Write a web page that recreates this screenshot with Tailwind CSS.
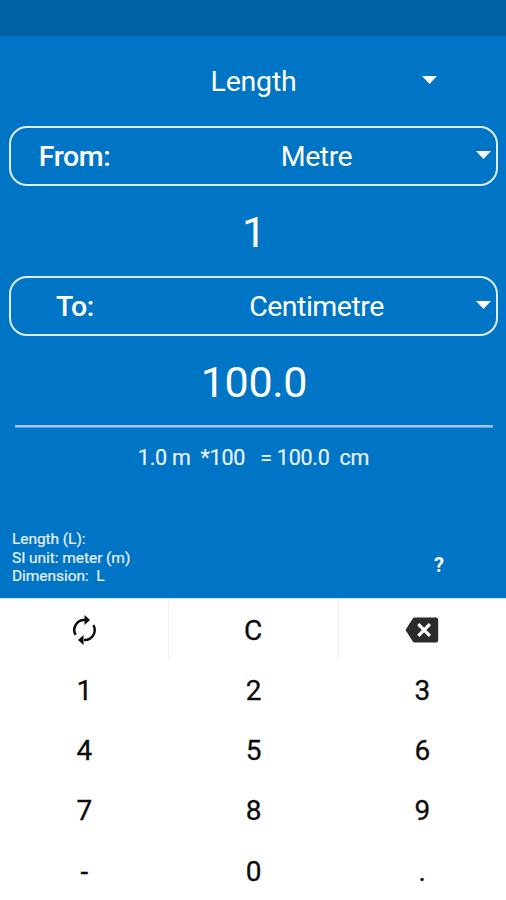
<!DOCTYPE html>
<html lang="en">
<head>
<meta charset="utf-8">
<title>Unit converter</title>
<script src="https://cdn.jsdelivr.net/npm/@tailwindcss/browser@4"></script>
</head>
<body class="flex h-[900px] w-[506px] flex-col overflow-hidden bg-[#0075c5] font-['Roboto','Liberation_Sans',sans-serif] text-white">
  <div class="h-9 shrink-0 bg-[#0062a2]"></div>
  <main class="flex h-[562px] shrink-0 flex-col">
    <div class="flex h-[90px] items-center pl-[84px] pr-[69px]">
      <span class="flex-1 pl-px pt-px text-center text-[28.5px] leading-[34px] tracking-[-0.2px]">Length</span>
      <svg class="mb-[2px] h-2 w-[15px]" viewBox="0 0 15 8" fill="currentColor"><path d="M0 0h15L7.5 8z"/></svg>
    </div>
    <div class="mx-[8.5px] flex h-[60px] items-center rounded-[18px] border-2 border-[#e0ecfa] pr-[5px]">
      <span class="w-[128px] pt-[2px] text-center text-[28.5px] font-medium leading-[34px] tracking-[-0.4px]">From:</span>
      <span class="flex-1 pl-[19px] pt-[2px] text-center text-[28.5px] leading-[34px] tracking-[-0.5px]">Metre</span>
      <svg class="mb-[2px] h-2 w-[15px]" viewBox="0 0 15 8" fill="currentColor"><path d="M0 0h15L7.5 8z"/></svg>
    </div>
    <div class="flex h-[90px] items-center justify-center pt-[2px] pl-[2px] text-[43px]">1</div>
    <div class="mx-[8.5px] flex h-[60px] items-center rounded-[18px] border-2 border-[#e0ecfa] pr-[5px]">
      <span class="w-[128px] pl-px pt-[2px] text-center text-[28.5px] font-medium leading-[34px] tracking-[-0.4px]">To:</span>
      <span class="flex-1 pl-[19px] pt-[2px] text-center text-[28.5px] leading-[34px] tracking-[-0.5px]">Centimetre</span>
      <svg class="mb-[2px] h-2 w-[15px]" viewBox="0 0 15 8" fill="currentColor"><path d="M0 0h15L7.5 8z"/></svg>
    </div>
    <div class="flex h-[89px] items-center justify-center pt-1 pl-[2px] text-[43px] tracking-[-0.3px]">100.0</div>
    <div class="ml-[14.5px] mr-[13px] h-[3px] shrink-0 border-b border-[#5d9fdc] bg-[#a3c8ee]"></div>
    <div class="mt-[17px] h-[26px] whitespace-pre pl-px text-center text-[21.5px] leading-[26px] tracking-[-0.27px] text-[#eaf2ff] [-webkit-text-stroke:0.2px]">1.0 m  *100   = 100.0  cm</div>
    <div class="mt-auto flex items-end justify-between pb-[13px] pl-3 pr-[62px]">
      <p class="whitespace-pre text-[15.5px] leading-[18.2px] tracking-[-0.06px] text-[#e6f0fd] [-webkit-text-stroke:0.2px]">Length (L):
SI unit: meter (m)
Dimension:  L</p>
      <span class="pb-[8px] text-[20px] font-bold leading-6">?</span>
    </div>
  </main>
  <section class="grid h-[302px] shrink-0 grid-cols-[168.5px_170px_167.5px] grid-rows-[61px_repeat(4,60.3px)] border-t border-[#cfe2f5] bg-white text-[28px] text-[#0c0c0c] [-webkit-text-stroke:0.3px] *:flex *:items-center *:justify-center">
    <div class="border-r border-[#f0f0f0]">
      <svg class="h-[34px] w-[34px]" viewBox="0 0 34 34" fill="none" stroke="currentColor" stroke-width="2.5"><path d="M8.6 21.9A10 10 0 0 1 18 7M26.4 12.1A10 10 0 0 1 17 27"/><path d="M17.5 2l5.5 5-5.5 5zM16.5 22L11 27l5.5 5z" fill="currentColor" stroke="none"/></svg>
    </div>
    <div class="border-r border-[#f0f0f0] pt-[2px]">C</div>
    <div>
      <svg class="h-[26px] w-[34px]" viewBox="0 0 34 26"><path d="M10 .5h21a2.2 2.2 0 0 1 2.2 2.2v20.6a2.2 2.2 0 0 1-2.2 2.2H10a3 3 0 0 1-2.4-1.2L.5 13l7.1-11.3A3 3 0 0 1 10 .5z" fill="#2b2b2b"/><path d="M13.3 7.2l11.6 11.6M24.9 7.2L13.3 18.8" stroke="#fff" stroke-width="3.2"/></svg>
    </div>
    <div class="pt-px">1</div><div class="pt-px">2</div><div class="pt-px">3</div>
    <div class="pt-px">4</div><div class="pt-px">5</div><div class="pt-px">6</div>
    <div class="pt-px">7</div><div class="pt-px">8</div><div class="pt-px">9</div>
    <div class="pt-px">-</div><div class="pt-px">0</div><div class="pt-px">.</div>
  </section>
</body>
</html>
